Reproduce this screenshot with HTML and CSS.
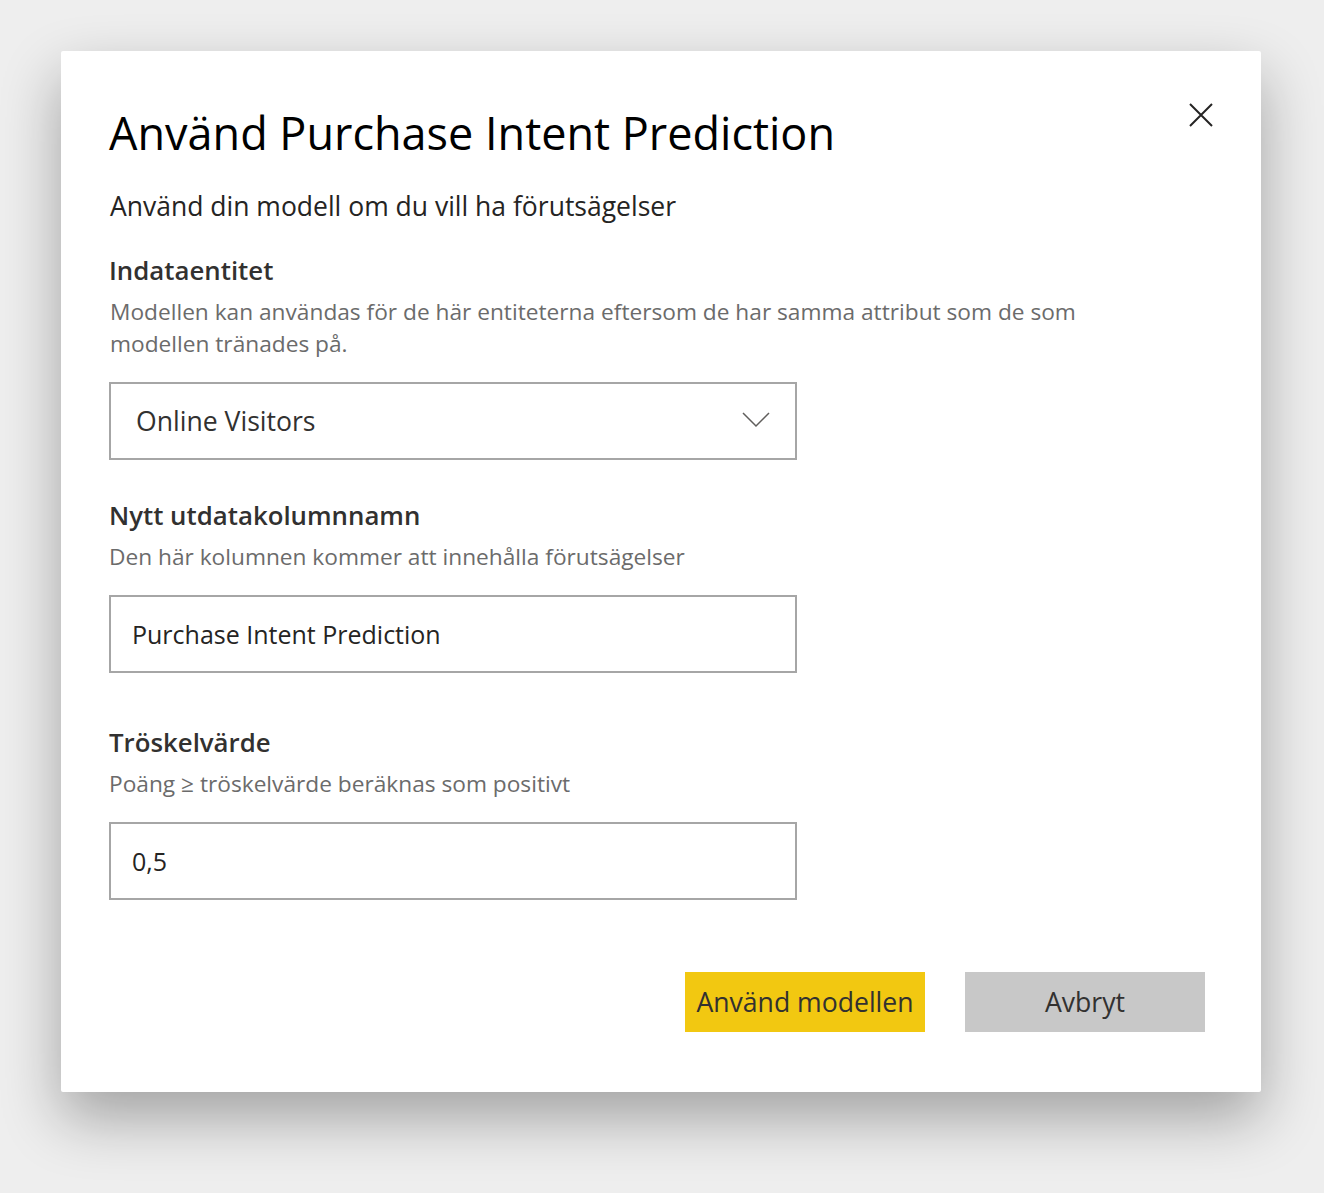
FILE: index.html
```html
<!DOCTYPE html>
<html lang="sv">
<head>
<meta charset="utf-8">
<title>Använd Purchase Intent Prediction</title>
<link rel="stylesheet" href="styles.css">
</head>
<body>
<div class="page">
  <div class="dialog" role="dialog">
    <button class="close" aria-label="Stäng">
      <svg width="24" height="24" viewBox="0 0 24 24"><path d="M1 1 L23 23 M23 1 L1 23" stroke="#252423" stroke-width="2" fill="none"/></svg>
    </button>
    <h1 class="title">Använd Purchase Intent Prediction</h1>
    <p class="subtitle">Använd din modell om du vill ha förutsägelser</p>

    <section class="field first">
      <h2 class="label">Indataentitet</h2>
      <p class="desc wide">Modellen kan användas för de här entiteterna eftersom de har samma attribut som de som modellen tränades på.</p>
      <div class="box select">
        <span class="value big">Online Visitors</span>
        <svg class="chev" width="28" height="16" viewBox="0 0 28 16"><path d="M1 1 L14 14 L27 1" stroke="#605e5c" stroke-width="1.5" fill="none"/></svg>
      </div>
    </section>

    <section class="field">
      <h2 class="label">Nytt utdatakolumnnamn</h2>
      <p class="desc">Den här kolumnen kommer att innehålla förutsägelser</p>
      <div class="box input"><span class="value">Purchase Intent Prediction</span></div>
    </section>

    <section class="field third">
      <h2 class="label">Tröskelvärde</h2>
      <p class="desc">Poäng ≥ tröskelvärde beräknas som positivt</p>
      <div class="box input"><span class="value">0,5</span></div>
    </section>

    <div class="actions">
      <button class="btn primary">Använd modellen</button>
      <button class="btn secondary">Avbryt</button>
    </div>
  </div>
</div>
</body>
</html>
```

FILE: styles.css
```css
* { box-sizing: border-box; }
html, body { margin: 0; padding: 0; }
body {
  background: #eeeeee;
  font-family: "Open Sans", "Noto Sans", "Liberation Sans", sans-serif;
  width: 1324px;
  height: 1193px;
  overflow: hidden;
}
.page {
  padding: 51px 0 0 61px;
}
.dialog {
  position: relative;
  width: 1200px;
  height: 1041px;
  background: #ffffff;
  border-radius: 2px;
  box-shadow: 0 26px 60px rgba(0,0,0,0.32);
  padding: 52px 56px 0 48px;
}
.close {
  position: absolute;
  top: 52px;
  right: 48px;
  width: 24px;
  height: 24px;
  padding: 0;
  border: 0;
  background: transparent;
  display: flex;
}
.title {
  margin: 0;
  font-size: 45px;
  font-weight: 400;
  line-height: 60px;
  color: #000;
}
.subtitle {
  margin: 27px 0 0 1px;
  font-size: 26.5px;
  line-height: 32px;
  color: #252423;
}
.field.first { margin-top: 32px; }
.field { margin-top: 39px; }
.field.third { margin-top: 53px; }
.label {
  margin: 0;
  font-size: 25.8px;
  font-weight: 600;
  line-height: 32px;
  color: #323130;
}
.desc {
  margin: 10px 0 0 0;
  font-size: 22.7px;
  line-height: 32px;
  color: #6b6b6b;
}
.desc.wide { max-width: 1010px; margin-left: 1px; }
.box {
  margin-top: 22px;
  width: 688px;
  height: 78px;
  border: 2px solid #a6a6a6;
  display: flex;
  align-items: center;
  justify-content: space-between;
  padding: 0 24px 0 21px;
}
.select { padding-left: 25px; }
.value {
  font-size: 25px;
  color: #252423;
}
.value.big { font-size: 26.6px; color: #323130; }
.chev { margin-top: -2px; margin-right: 1px; }
.actions {
  display: flex;
  justify-content: flex-end;
  gap: 40px;
  margin-top: 72px;
}
.btn {
  width: 240px;
  height: 60px;
  border: 0;
  border-radius: 0;
  font-family: inherit;
  font-size: 26.6px;
  color: #323130;
  padding: 0;
}
.primary { background: #f2c811; }
.secondary { background: #c8c8c8; }
```
